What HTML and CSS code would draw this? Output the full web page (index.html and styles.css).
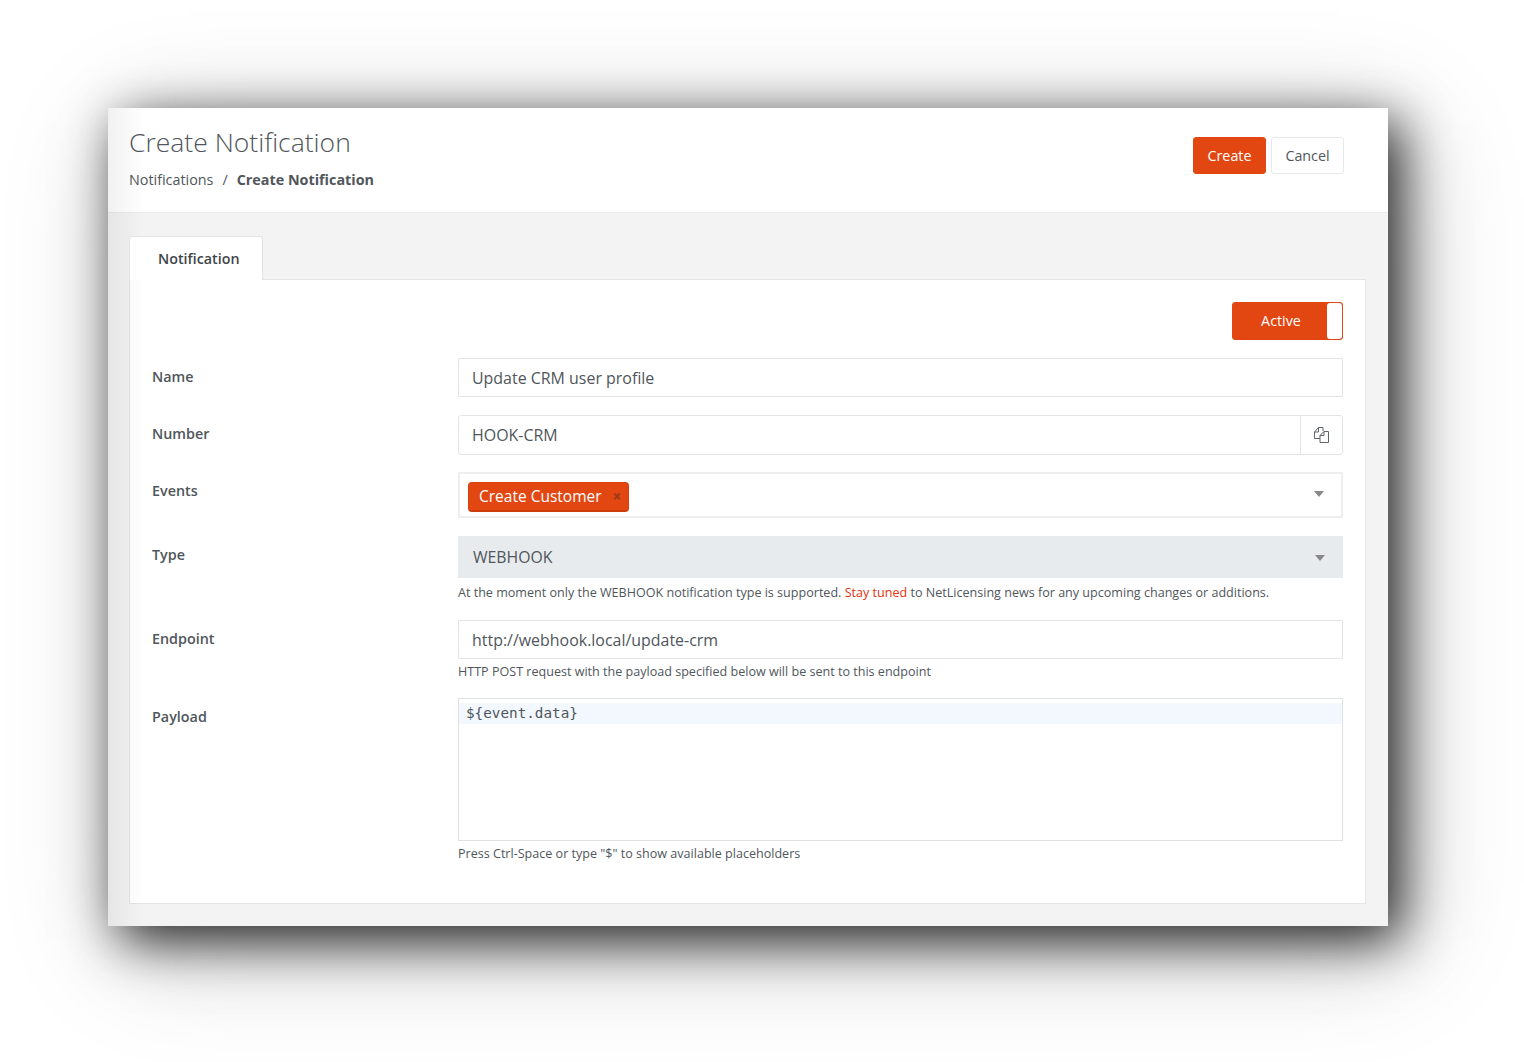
FILE: index.html
```html
<!DOCTYPE html>
<html lang="en">
<head>
<meta charset="utf-8">
<title>Create Notification</title>
<link rel="stylesheet" href="styles.css">
</head>
<body>
<main class="window">
  <header class="page-head">
    <div class="head-text">
      <h1 class="title">Create Notification</h1>
      <nav class="crumbs"><span>Notifications</span><span class="sep">/</span><strong>Create Notification</strong></nav>
    </div>
    <div class="head-actions">
      <button class="btn btn-primary">Create</button>
      <button class="btn btn-default">Cancel</button>
    </div>
  </header>
  <section class="content">
    <div class="tabs"><div class="tab">Notification</div></div>
    <div class="panel">
      <div class="toggle-row">
        <div class="toggle"><span class="toggle-label">Active</span><span class="toggle-knob"></span></div>
      </div>
      <div class="row row-name">
        <label class="label">Name</label>
        <div class="control"><div class="input input-name">Update CRM user profile</div></div>
      </div>
      <div class="row row-number">
        <label class="label">Number</label>
        <div class="control">
          <div class="input-group">
            <div class="group-text">HOOK-CRM</div>
            <div class="group-addon">
              <svg class="copy-icon" width="15" height="16" viewBox="0 0 15 16" fill="none" stroke="#5f6468" stroke-width="1">
                <path d="M4.5.5H9V4M4.5.5.5 5v6.5H6M4.5.5V5H.5"/>
                <path d="M10 4.5h4.5v11H6v-7zM10 4.5v4H6"/>
              </svg>
            </div>
          </div>
        </div>
      </div>
      <div class="row row-events">
        <label class="label">Events</label>
        <div class="control">
          <div class="select-tags">
            <span class="tag">Create Customer<span class="tag-x">×</span></span>
            <span class="caret"></span>
          </div>
        </div>
      </div>
      <div class="row row-type">
        <label class="label">Type</label>
        <div class="control">
          <div class="select-disabled">WEBHOOK<span class="caret"></span></div>
          <p class="help help-type">At the moment only the WEBHOOK notification type is supported. <a class="link">Stay tuned</a> to NetLicensing news for any upcoming changes or additions.</p>
        </div>
      </div>
      <div class="row row-endpoint">
        <label class="label">Endpoint</label>
        <div class="control">
          <div class="input input-endpoint">http://webhook.local/update-crm</div>
          <p class="help help-endpoint">HTTP POST request with the payload specified below will be sent to this endpoint</p>
        </div>
      </div>
      <div class="row row-payload">
        <label class="label">Payload</label>
        <div class="control">
          <div class="editor"><div class="editor-line">${event.data}</div></div>
          <p class="help help-payload">Press Ctrl-Space or type "$" to show available placeholders</p>
        </div>
      </div>
    </div>
  </section>
</main>
</body>
</html>
```
FILE: styles.css
```css
* { box-sizing: border-box; }
html, body { margin: 0; padding: 0; background: #fff; }
body {
  height: 1062px;
  overflow: hidden;
  padding: 108px 136px 0 108px;
  font-family: "Open Sans", sans-serif;
  color: #50565b;
}
.window {
  width: 1280px;
  height: 818px;
  background: #f3f3f3;
  box-shadow: 12px 14px 50px rgba(0,0,0,.85), 16px 22px 110px rgba(0,0,0,.22);
  display: flex;
  flex-direction: column;
  position: relative;
}
.window::after {
  content: "";
  position: absolute;
  inset: 0 auto 0 0;
  width: 36px;
  background: linear-gradient(to right, rgba(0,0,0,.055), rgba(0,0,0,0));
  pointer-events: none;
}
.page-head {
  height: 105px;
  background: #fff;
  border-bottom: 1px solid #e8eaec;
  padding: 17px 44px 0 21px;
  display: flex;
  justify-content: space-between;
  align-items: flex-start;
}
.title {
  margin: 0;
  font-size: 26.5px;
  line-height: 34px;
  font-weight: 300;
  color: #50565b;
}
.crumbs {
  margin-top: 11px;
  font-size: 14.35px;
  line-height: 20px;
}
.crumbs strong { font-weight: 700; }
.sep { margin: 0 9px; }
.head-actions {
  display: flex;
  gap: 5px;
  margin-top: 12px;
}
.btn {
  height: 37px;
  width: 73px;
  border-radius: 3px;
  font-family: inherit;
  font-size: 14.3px;
  padding: 0;
}
.btn-primary { background: #e24712; border: 1px solid #e24712; color: #fff; }
.btn-default { background: #fff; border: 1px solid #e6e8ea; color: #50565b; }
.content {
  flex: 1;
  padding: 23px 22px 22px 21px;
  display: flex;
  flex-direction: column;
}
.tabs { display: flex; height: 43px; }
.tab {
  width: 134px;
  height: 44px;
  background: #fff;
  border: 1px solid #e2e5e8;
  border-bottom: 0;
  border-radius: 3px 3px 0 0;
  font-size: 14.3px;
  font-weight: 600;
  line-height: 44px;
  padding-left: 28px;
  color: #3f454a;
  position: relative;
  z-index: 1;
}
.panel {
  flex: 1;
  background: #fff;
  border: 1px solid #e2e5e8;
  padding: 22px 22px 0;
}
.toggle-row { display: flex; justify-content: flex-end; margin-bottom: 18px; }
.toggle {
  width: 111px;
  height: 38px;
  background: #e24712;
  border-radius: 3px;
  border: 1px solid #e24712;
  display: flex;
  color: #fff;
  font-size: 14.3px;
}
.toggle-label { flex: 1; text-align: center; line-height: 36px; padding-left: 2px; }
.toggle-knob {
  width: 15px;
  background: #fff;
  border-radius: 3px;
}
.row { display: flex; margin-bottom: 18px; }
.row-number { margin-bottom: 17px; }
.label {
  width: 306px;
  flex: none;
  font-size: 14.35px;
  font-weight: 600;
  line-height: 20px;
  padding-top: 9px;
  color: #50565b;
}
.control { flex: 1; min-width: 0; }
.input, .group-text {
  font-size: 15.95px;
  padding-left: 13px;
}
.input {
  height: 39px;
  line-height: 38px;
  background: #fff;
  border: 1px solid #e2e5e8;
  border-radius: 1px;
}
.input-group {
  display: flex;
  height: 40px;
  border: 1px solid #e2e5e8;
  border-radius: 3px;
}
.group-text { flex: 1; line-height: 38px; }
.group-addon {
  width: 42px;
  border-left: 1px solid #e2e5e8;
  display: flex;
  align-items: center;
  justify-content: center;
}
.select-tags {
  height: 46px;
  border: 2px solid #eceeef;
  padding: 8px 17px 0 8px;
  display: flex;
  justify-content: space-between;
  align-items: flex-start;
}
.tag {
  height: 30px;
  background: #e24712;
  border: 1px solid #d8400e;
  border-bottom: 2px solid #cf3c0c;
  border-radius: 4px;
  color: #fff;
  font-size: 15.5px;
  line-height: 27px;
  padding: 0 7px 0 10px;
  display: inline-flex;
}
.tag-x {
  margin-left: 11px;
  font-weight: 800;
  font-size: 15px;
  color: #a33a14;
}
.caret {
  width: 0;
  height: 0;
  border-left: 5.5px solid transparent;
  border-right: 5.5px solid transparent;
  border-top: 6px solid #888;
}
.select-tags .caret { margin-top: 9px; }
.select-disabled {
  height: 42px;
  background: #e8ebee;
  font-size: 15.8px;
  line-height: 42px;
  padding: 0 18px 0 15px;
  display: flex;
  justify-content: space-between;
  align-items: center;
}
.select-disabled .caret { margin-top: 2px; }
.help {
  margin: 0;
  font-size: 12.57px;
  line-height: 18px;
}
.help-type { margin-top: 6px; }
.help-endpoint { margin-top: 4px; margin-bottom: -1px; }
.help-payload { margin-top: 4px; }
.link { color: #e4300a; }
.editor {
  height: 143px;
  border: 1px solid #dfe2e5;
  padding-top: 4px;
}
.editor-line {
  height: 21px;
  background: #f2f8fd;
  font-family: "DejaVu Sans Mono", monospace;
  font-size: 14.3px;
  line-height: 21px;
  padding-left: 7px;
}
```
